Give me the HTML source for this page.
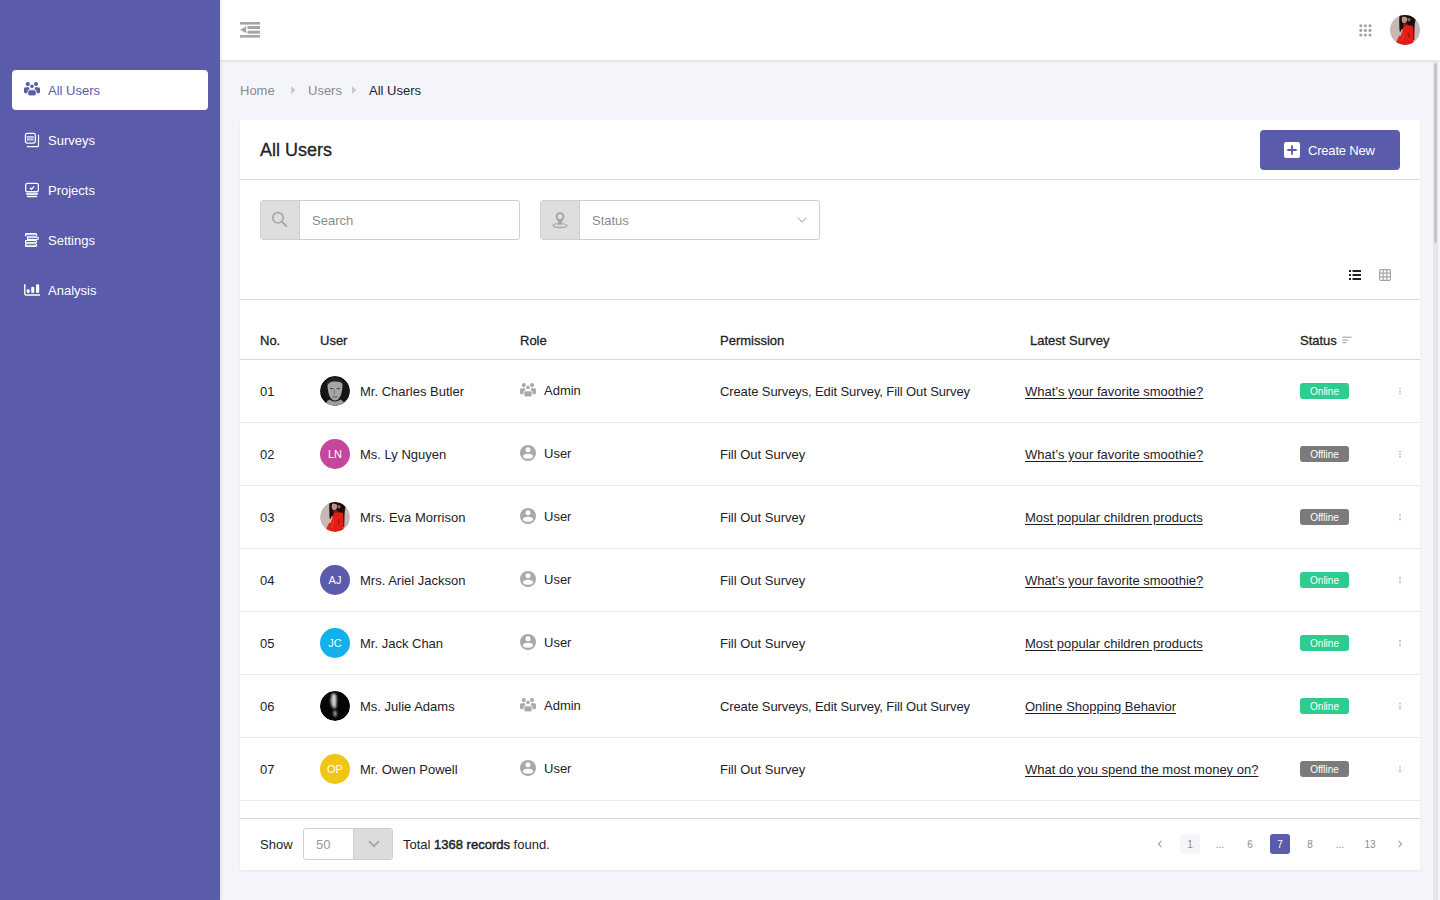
<!DOCTYPE html>
<html><head><meta charset="utf-8"><title>All Users</title>
<style>
*{box-sizing:border-box;margin:0;padding:0}
html,body{width:1440px;height:900px;overflow:hidden}
body{font-family:"Liberation Sans",sans-serif;font-size:13px;color:#1e2228;background:#f4f5fa;position:relative}
.abs{position:absolute}
#side{position:absolute;left:0;top:0;width:220px;height:900px;background:#5a5bab;box-shadow:1px 0 3px rgba(0,0,0,.1);z-index:2}
.mi{position:absolute;left:12px;width:196px;height:40px;border-radius:4px;color:#fff;font-size:13px}
.mi.act{background:#fff;color:#5a5bab}
.mi svg{position:absolute;left:12px;top:12px}
.mi span{position:absolute;left:36px;top:1px;line-height:40px}
#hdr{position:absolute;left:220px;top:0;width:1220px;height:60px;background:#fff;box-shadow:0 1px 3px rgba(0,0,0,.12)}
#sb{position:absolute;left:1434px;top:60px;width:6px;height:840px;background:#f4f5fa}
.crumb{position:absolute;top:83px;line-height:16px;color:#8a8a8a}
#card{position:absolute;left:240px;top:120px;width:1180px;height:750px;background:#fff;box-shadow:0 1px 2px rgba(0,0,0,.06)}
.hline{position:absolute;left:0;width:1180px;height:1px}
.th{position:absolute;top:334px;line-height:14px;font-weight:400;-webkit-text-stroke:.3px #1e2228;color:#1e2228}
.row{position:absolute;left:240px;width:1180px;height:63px;border-bottom:1px solid #eaeaea}
.cell{position:absolute;line-height:16px;top:24px;white-space:nowrap}
.av{position:absolute;left:80px;top:16px;width:30px;height:30px;border-radius:50%;color:#fff;font-size:11px;text-align:center;line-height:30px}
.badge{position:absolute;left:1060px;top:23px;width:49px;height:16px;border-radius:3px;color:#fff;font-size:10px;text-align:center;line-height:17px}
.on{background:#2ecc8e}.off{background:#7b7b7b}
.dots{position:absolute;left:1159px;top:28px;width:2px;height:7px}
.pg{position:absolute;top:834px;width:20px;height:20px;border-radius:3px;text-align:center;line-height:22px;font-size:10px;color:#8c8c8c}
.pg.act{background:#5a5bab;color:#fff}
.ri{position:absolute;left:280px;top:23px}
.lnk{text-decoration:underline;text-underline-offset:2px}
</style></head>
<body>
<svg width="0" height="0" style="position:absolute">
<defs>
<clipPath id="cc"><circle cx="15" cy="15" r="15"/></clipPath>
<filter id="bl" x="-20%" y="-20%" width="140%" height="140%"><feGaussianBlur stdDeviation="0.45"/></filter><filter id="bl2" x="-50%" y="-50%" width="200%" height="200%"><feGaussianBlur stdDeviation="0.8"/></filter>
<symbol id="pEva" viewBox="0 0 30 30"><g clip-path="url(#cc)"><rect width="30" height="30" fill="#c9b6b6"/><g filter="url(#bl)"><path d="M9.5 0H26v3c-.6 2.5-1.2 5-1.4 8.5L24.2 25h-2L21 13l-9 1c-.8 1.2-1.2 2.5-2 3.5L9.5 15C9.3 10 9 5 9.5 0z" fill="#1a1010"/><path d="M12 2c1.6-.6 3.8-.4 4.8.6.9 1.6.5 4-1.2 5.2-1.2.7-2.8.4-3.4-.8C11.6 5.8 11.6 4 12 2z" fill="#c98e88"/><path d="M17.8 3.2c1-.4 2-.2 2.6.5.4 1 0 2.3-.9 2.8-.8.3-1.6 0-1.9-.7-.3-.9-.2-1.9.2-2.6z" fill="#9a5a54"/><path d="M13.2 8.8c1.5-.6 3.5-.6 5 .2l-.8 1.8-3.6.3z" fill="#6a2a24"/><path d="M14 10.8c3-.9 6.5-.9 9 .4.6 5.5.5 12 .4 18.8H8.5c.3-3.5 1.5-7.5 3-11.5.9-2.8 1.5-5.8 2.5-7.7z" fill="#e31c12"/><path d="M5.5 30c.5-3 2-6.5 4-9.5l2.5 1.2C11 24.5 10 27.5 9.5 30z" fill="#e62418"/><path d="M8.8 18.8c.5-1.3 1.3-2 2-1.8l-.5 2.6z" fill="#e0aaa2"/><path d="M18.5 17c1 1.5 1.2 3.5.6 5.5l-1.2-.5z" fill="#a01010"/><path d="M12.5 16c1.5 3 1 7-1 10" fill="none" stroke="#f04a3a" stroke-width=".8"/></g></g></symbol>
<symbol id="pCharles" viewBox="0 0 30 30"><g clip-path="url(#cc)"><rect width="30" height="30" fill="#151515"/><g filter="url(#bl)"><path d="M7.5 9c0-4 3-6.5 7.5-6.5S22.5 5 22.5 9c0 3-.5 7-1.8 10.5-1.3 3-3.5 5-5.7 5s-4.4-2-5.7-5C8 16 7.5 12 7.5 9z" fill="#a3a6a8"/><path d="M7 9.5c0-4.5 3.2-7.5 8-7.5s8.3 2.5 8.5 7c-1.5-2.5-4-3.5-8.5-3.5S9 7 7 9.5z" fill="#232323"/><path d="M10 12.5c1-.8 2.5-.8 3.5 0l-.3.9c-1-.5-2-.5-3 0zM16.5 12.5c1-.8 2.5-.8 3.5 0l-.2.9c-1-.5-2-.5-3 0z" fill="#3c3c3c"/><path d="M14.5 13.5v4.5l-1 .8" fill="none" stroke="#6a6a6a" stroke-width=".8"/><path d="M12.5 20.2c1.5.6 3.5.6 5 0l-.4 1c-1.4.4-2.8.4-4.2 0z" fill="#4a4a4a"/><path d="M5 30c.5-3 2-5.5 4.5-6.5 1.8 1.2 3.5 2 5.5 2s3.7-.8 5.5-2C23 24.5 24.5 27 25 30z" fill="#9a9d9f"/><path d="M3 17c1 3 2.5 5 4 6.5L6 30H0V18z" fill="#0d0d0d"/></g></g></symbol>
<symbol id="pJulie" viewBox="0 0 30 30"><g clip-path="url(#cc)"><rect width="30" height="30" fill="#050505"/><g filter="url(#bl2)"><path d="M11.5 3.5c1.5-1.5 3.8-1.5 4.6.5.6 2.5.6 6.5.2 10.5-.2 1.8-.6 3-1.3 3.2-1.2-.6-2.3-2-3-4-.8-2.5-1-5.5-.5-10.2z" fill="#d4d4d4"/><path d="M10 8c.5 3 1 6 2.5 9" fill="none" stroke="#555" stroke-width="1"/><path d="M13.5 20c1.2-.4 2.5 0 3 1 .4 1.5.2 3.5-.5 4.8-1 .3-1.8-.4-2.2-1.6-.4-1.2-.5-2.8-.3-4.2z" fill="#a8a8a8"/></g></g></symbol>
</defs></svg>
<div id="side">
  <div class="mi act" style="top:70px">
    <svg   width="16" height="14" viewBox="0 0 16 14"><g fill="#5a5bab"><circle cx="3.8" cy="2.1" r="2.1"/><circle cx="12" cy="2.1" r="2.1"/><path d="M0 6.8A1.5 1.5 0 0 1 1.5 5.3H5.2V11.3H1.6A1.6 1.6 0 0 1 0 9.7z"/><path d="M16 6.8A1.5 1.5 0 0 0 14.5 5.3H10.8V11.3H14.4A1.6 1.6 0 0 0 16 9.7z"/><circle cx="8" cy="4.3" r="2.3" stroke="#fff" stroke-width="1"/><rect x="3.8" y="7.8" width="8.4" height="6.1" rx="1.9" stroke="#fff" stroke-width="1"/></g></svg>
    <span>All Users</span>
  </div>
  <div class="mi" style="top:120px">
    <svg width="16" height="16" viewBox="0 0 16 16" style="top:12px"><rect x="1.45" y="1.35" width="9.9" height="9.8" rx="1.8" fill="none" stroke="#fff" stroke-width="1.3"/><path d="M2.8 14.6H13.3a1.2 1.2 0 0 0 1.2-1.2V2.8" fill="none" stroke="#fff" stroke-width="1.2"/><rect x="2.8" y="4.3" width="6.9" height="1" fill="#fff"/><rect x="2.8" y="5.3" width="6.9" height="2.2" fill="#fff" opacity=".5"/><rect x="2.8" y="7.5" width="6.9" height=".9" fill="#fff"/></svg>
    <span>Surveys</span>
  </div>
  <div class="mi" style="top:170px">
    <svg width="16" height="16" viewBox="0 0 16 16"><rect x="1.65" y="1.45" width="12.7" height="8.3" rx="1.5" fill="none" stroke="#fff" stroke-width="1.3"/><path d="M6.1 5.8L7.5 7.2 10.2 4.4" fill="none" stroke="#fff" stroke-width="1.3"/><path d="M1.8 11H14.2L13.5 13H2.5z" fill="#fff" opacity=".85"/><rect x="2.8" y="13.8" width="10.4" height="1.4" rx=".6" fill="#fff"/></svg>
    <span>Projects</span>
  </div>
  <div class="mi" style="top:220px">
    <svg width="16" height="16" viewBox="0 0 16 16"><g fill="#fff"><path d="M1 2.2A1.2 1.2 0 0 1 2.2 1H11.5A1.75 1.75 0 0 1 11.5 4.5H1z"/><path d="M3 4.5H13.2A1.75 1.75 0 0 1 13.2 8H3z"/><path d="M1 8H11.5A1.75 1.75 0 0 1 11.5 11.5H1z"/><path d="M1 11.5H11.5A1.75 1.75 0 0 1 11.5 15H2.2A1.2 1.2 0 0 1 1 13.8z"/></g><g fill="#5a5bab"><rect x="2.3" y="2.7" width="9.5" height="1.1"/><rect x="4.2" y="5.8" width="9.5" height="1.1"/><rect x="2.3" y="9" width="9.5" height="1.1"/><rect x="2.3" y="12.2" width="9.5" height="1.1"/><rect x="1" y="4.5" width="2" height="3.5"/></g></svg>
    <span>Settings</span>
  </div>
  <div class="mi" style="top:270px">
    <svg width="16" height="14" viewBox="0 0 16 14"><path d="M.75 2.3V11.5a1.5 1.5 0 0 0 1.5 1.5H16" fill="none" stroke="#fff" stroke-width="1.4"/><g fill="#fff"><rect x="2.7" y="7.3" width="3" height="3.7" rx="1.2"/><rect x="7.2" y="4.8" width="3.1" height="6.2" rx="1.3"/><rect x="12" y="2.2" width="3.2" height="8.8" rx="1.3"/></g></svg>
    <span>Analysis</span>
  </div>
</div>

<div id="hdr">
  <svg class="abs" style="left:20px;top:22px" width="20" height="16" viewBox="0 0 20 16"><g fill="#a6a6a6"><rect x="0" y="0" width="20" height="2.6"/><rect x="7.5" y="4" width="12.5" height="3"/><rect x="7.5" y="8.7" width="12.5" height="3"/><rect x="0" y="13" width="20" height="2.6"/><path d="M0 7.8L6.2 4.3v7z"/></g></svg>
  <svg class="abs" style="left:1138px;top:24px" width="14" height="14" viewBox="0 0 14 14"><g fill="#a3a3a3"><circle cx="2.8" cy="1.8" r="1.55"/><circle cx="7.4" cy="1.8" r="1.55"/><circle cx="12" cy="1.8" r="1.55"/><circle cx="2.8" cy="6.4" r="1.55"/><circle cx="7.4" cy="6.4" r="1.55"/><circle cx="12" cy="6.4" r="1.55"/><circle cx="2.8" cy="11" r="1.55"/><circle cx="7.4" cy="11" r="1.55"/><circle cx="12" cy="11" r="1.55"/></g></svg>
  <svg class="abs" style="left:1170px;top:15px" width="30" height="30" viewBox="0 0 30 30"><use href="#pEva"/></svg>
</div>

<div class="crumb" style="left:240px">Home</div>
<svg class="abs" style="left:291px;top:86px" width="5" height="8" viewBox="0 0 5 8"><path d="M0 0l4.5 4L0 8z" fill="#c9c9c9"/></svg>
<div class="crumb" style="left:308px">Users</div>
<svg class="abs" style="left:352px;top:86px" width="5" height="8" viewBox="0 0 5 8"><path d="M0 0l4.5 4L0 8z" fill="#c9c9c9"/></svg>
<div class="crumb" style="left:369px;color:#1e2228">All Users</div>

<div id="card">
  <div class="abs" style="left:20px;top:20px;font-size:18px;line-height:20px;-webkit-text-stroke:.3px #1e2228">All Users</div>
  <div class="abs" style="left:1020px;top:10px;width:140px;height:40px;background:#5a5bab;border-radius:4px;color:#fff">
    <svg class="abs" style="left:24px;top:12px" width="16" height="16" viewBox="0 0 16 16"><rect width="16" height="16" rx="2" fill="#fff"/><path d="M8 3.3v9.4M3.3 8h9.4" stroke="#5a5bab" stroke-width="1.8"/></svg>
    <span class="abs" style="left:48px;top:13px;line-height:16px;font-size:13px;letter-spacing:-.2px">Create New</span>
  </div>
  <div class="hline" style="top:59px;background:#dcdcdc"></div>
  <div class="hline" style="top:179px;background:#dcdcdc"></div>
  <div class="hline" style="top:239px;background:#d6d6d6"></div>
  <div class="hline" style="top:698px;background:#d6d6d6"></div>
</div>

<div class="th" style="left:260px">No.</div>
<div class="th" style="left:320px">User</div>
<div class="th" style="left:520px">Role</div>
<div class="th" style="left:720px">Permission</div>
<div class="th" style="left:1030px">Latest Survey</div>
<div class="th" style="left:1300px">Status</div>

<div class="row" style="top:360px">
  <div class="cell" style="left:20px">01</div>
  <svg class="av" width="30" height="30" viewBox="0 0 30 30"><use href="#pCharles"/></svg>
  <div class="cell" style="left:120px">Mr. Charles Butler</div>
  <svg class="ri" style="top:23px" width="16" height="14" viewBox="0 0 16 14"><g fill="#a9a9a9"><circle cx="3.8" cy="2.1" r="2.1"/><circle cx="12" cy="2.1" r="2.1"/><path d="M0 6.8A1.5 1.5 0 0 1 1.5 5.3H5.2V11.3H1.6A1.6 1.6 0 0 1 0 9.7z"/><path d="M16 6.8A1.5 1.5 0 0 0 14.5 5.3H10.8V11.3H14.4A1.6 1.6 0 0 0 16 9.7z"/><circle cx="8" cy="4.3" r="2.3" stroke="#fff" stroke-width="1"/><rect x="3.8" y="7.8" width="8.4" height="6.1" rx="1.9" stroke="#fff" stroke-width="1"/></g></svg>
  <div class="cell" style="left:304px;top:23px">Admin</div>
  <div class="cell" style="left:480px;letter-spacing:-.11px">Create Surveys, Edit Survey, Fill Out Survey</div>
  <div class="cell lnk" style="left:785px">What’s your favorite smoothie?</div>
  <div class="badge on">Online</div>
  <svg class="dots" width="2" height="7" viewBox="0 0 2 7"><g fill="#bdbdbd"><rect y="0" width="2" height="1.2"/><rect y="2.6" width="2" height="1.6" fill="#d2d2d2"/><rect y="5" width="2" height="1.2"/></g></svg>
</div>
<div class="row" style="top:423px">
  <div class="cell" style="left:20px">02</div>
  <div class="av" style="background:#c4479b">LN</div>
  <div class="cell" style="left:120px">Ms. Ly Nguyen</div>
  <svg class="ri" style="top:22px" width="16" height="16" viewBox="0 0 16 16"><circle cx="8" cy="8" r="8" fill="#a9a9a9"/><circle cx="8" cy="4.7" r="2.5" fill="#fff"/><ellipse cx="8" cy="11.2" rx="5" ry="2.5" fill="#fff"/></svg>
  <div class="cell" style="left:304px;top:23px">User</div>
  <div class="cell" style="left:480px">Fill Out Survey</div>
  <div class="cell lnk" style="left:785px">What’s your favorite smoothie?</div>
  <div class="badge off">Offline</div>
  <svg class="dots" width="2" height="7" viewBox="0 0 2 7"><g fill="#bdbdbd"><rect y="0" width="2" height="1.2"/><rect y="2.6" width="2" height="1.6" fill="#d2d2d2"/><rect y="5" width="2" height="1.2"/></g></svg>
</div>
<div class="row" style="top:486px">
  <div class="cell" style="left:20px">03</div>
  <svg class="av" width="30" height="30" viewBox="0 0 30 30"><use href="#pEva"/></svg>
  <div class="cell" style="left:120px">Mrs. Eva Morrison</div>
  <svg class="ri" style="top:22px" width="16" height="16" viewBox="0 0 16 16"><circle cx="8" cy="8" r="8" fill="#a9a9a9"/><circle cx="8" cy="4.7" r="2.5" fill="#fff"/><ellipse cx="8" cy="11.2" rx="5" ry="2.5" fill="#fff"/></svg>
  <div class="cell" style="left:304px;top:23px">User</div>
  <div class="cell" style="left:480px">Fill Out Survey</div>
  <div class="cell lnk" style="left:785px">Most popular children products</div>
  <div class="badge off">Offline</div>
  <svg class="dots" width="2" height="7" viewBox="0 0 2 7"><g fill="#bdbdbd"><rect y="0" width="2" height="1.2"/><rect y="2.6" width="2" height="1.6" fill="#d2d2d2"/><rect y="5" width="2" height="1.2"/></g></svg>
</div>
<div class="row" style="top:549px">
  <div class="cell" style="left:20px">04</div>
  <div class="av" style="background:#5a5bab">AJ</div>
  <div class="cell" style="left:120px">Mrs. Ariel Jackson</div>
  <svg class="ri" style="top:22px" width="16" height="16" viewBox="0 0 16 16"><circle cx="8" cy="8" r="8" fill="#a9a9a9"/><circle cx="8" cy="4.7" r="2.5" fill="#fff"/><ellipse cx="8" cy="11.2" rx="5" ry="2.5" fill="#fff"/></svg>
  <div class="cell" style="left:304px;top:23px">User</div>
  <div class="cell" style="left:480px">Fill Out Survey</div>
  <div class="cell lnk" style="left:785px">What’s your favorite smoothie?</div>
  <div class="badge on">Online</div>
  <svg class="dots" width="2" height="7" viewBox="0 0 2 7"><g fill="#bdbdbd"><rect y="0" width="2" height="1.2"/><rect y="2.6" width="2" height="1.6" fill="#d2d2d2"/><rect y="5" width="2" height="1.2"/></g></svg>
</div>
<div class="row" style="top:612px">
  <div class="cell" style="left:20px">05</div>
  <div class="av" style="background:#12b1eb">JC</div>
  <div class="cell" style="left:120px">Mr. Jack Chan</div>
  <svg class="ri" style="top:22px" width="16" height="16" viewBox="0 0 16 16"><circle cx="8" cy="8" r="8" fill="#a9a9a9"/><circle cx="8" cy="4.7" r="2.5" fill="#fff"/><ellipse cx="8" cy="11.2" rx="5" ry="2.5" fill="#fff"/></svg>
  <div class="cell" style="left:304px;top:23px">User</div>
  <div class="cell" style="left:480px">Fill Out Survey</div>
  <div class="cell lnk" style="left:785px">Most popular children products</div>
  <div class="badge on">Online</div>
  <svg class="dots" width="2" height="7" viewBox="0 0 2 7"><g fill="#bdbdbd"><rect y="0" width="2" height="1.2"/><rect y="2.6" width="2" height="1.6" fill="#d2d2d2"/><rect y="5" width="2" height="1.2"/></g></svg>
</div>
<div class="row" style="top:675px">
  <div class="cell" style="left:20px">06</div>
  <svg class="av" width="30" height="30" viewBox="0 0 30 30"><use href="#pJulie"/></svg>
  <div class="cell" style="left:120px">Ms. Julie Adams</div>
  <svg class="ri" style="top:23px" width="16" height="14" viewBox="0 0 16 14"><g fill="#a9a9a9"><circle cx="3.8" cy="2.1" r="2.1"/><circle cx="12" cy="2.1" r="2.1"/><path d="M0 6.8A1.5 1.5 0 0 1 1.5 5.3H5.2V11.3H1.6A1.6 1.6 0 0 1 0 9.7z"/><path d="M16 6.8A1.5 1.5 0 0 0 14.5 5.3H10.8V11.3H14.4A1.6 1.6 0 0 0 16 9.7z"/><circle cx="8" cy="4.3" r="2.3" stroke="#fff" stroke-width="1"/><rect x="3.8" y="7.8" width="8.4" height="6.1" rx="1.9" stroke="#fff" stroke-width="1"/></g></svg>
  <div class="cell" style="left:304px;top:23px">Admin</div>
  <div class="cell" style="left:480px;letter-spacing:-.11px">Create Surveys, Edit Survey, Fill Out Survey</div>
  <div class="cell lnk" style="left:785px">Online Shopping Behavior</div>
  <div class="badge on">Online</div>
  <svg class="dots" width="2" height="7" viewBox="0 0 2 7"><g fill="#bdbdbd"><rect y="0" width="2" height="1.2"/><rect y="2.6" width="2" height="1.6" fill="#d2d2d2"/><rect y="5" width="2" height="1.2"/></g></svg>
</div>
<div class="row" style="top:738px">
  <div class="cell" style="left:20px">07</div>
  <div class="av" style="background:#f1c514">OP</div>
  <div class="cell" style="left:120px">Mr. Owen Powell</div>
  <svg class="ri" style="top:22px" width="16" height="16" viewBox="0 0 16 16"><circle cx="8" cy="8" r="8" fill="#a9a9a9"/><circle cx="8" cy="4.7" r="2.5" fill="#fff"/><ellipse cx="8" cy="11.2" rx="5" ry="2.5" fill="#fff"/></svg>
  <div class="cell" style="left:304px;top:23px">User</div>
  <div class="cell" style="left:480px">Fill Out Survey</div>
  <div class="cell lnk" style="left:785px">What do you spend the most money on?</div>
  <div class="badge off">Offline</div>
  <svg class="dots" width="2" height="7" viewBox="0 0 2 7"><g fill="#bdbdbd"><rect y="0" width="2" height="1.2"/><rect y="2.6" width="2" height="1.6" fill="#d2d2d2"/><rect y="5" width="2" height="1.2"/></g></svg>
</div>
<!-- filters -->
<div class="abs" style="left:260px;top:200px;width:260px;height:40px;border:1px solid #cfcfcf;border-radius:3px;background:#fff;overflow:hidden">
  <div class="abs" style="left:0;top:0;width:39px;height:38px;background:#dedede;border-right:1px solid #cfcfcf"></div>
  <svg class="abs" style="left:0;top:0" width="39" height="38" viewBox="0 0 39 38"><circle cx="17" cy="16.8" r="5.2" fill="none" stroke="#a6a6a6" stroke-width="1.6"/><path d="M20.8 20.6l5 5" stroke="#a6a6a6" stroke-width="1.8"/></svg>
  <div class="abs" style="left:51px;top:12px;line-height:16px;color:#8c8c8c">Search</div>
</div>
<div class="abs" style="left:540px;top:200px;width:280px;height:40px;border:1px solid #cfcfcf;border-radius:3px;background:#fff;overflow:hidden">
  <div class="abs" style="left:0;top:0;width:39px;height:38px;background:#dedede;border-right:1px solid #cfcfcf"></div>
  <svg class="abs" style="left:0;top:0" width="39" height="38" viewBox="0 0 39 38"><path fill="#a6a6a6" fill-rule="evenodd" d="M19 24.8L15.12 17.58A4.4 4.4 0 1 1 22.88 17.58Z M21.5 15.5A2.5 2.5 0 1 0 16.5 15.5A2.5 2.5 0 1 0 21.5 15.5Z"/><ellipse cx="19" cy="24.6" rx="6.9" ry="1.9" fill="none" stroke="#a6a6a6" stroke-width="1.3"/></svg>
  <div class="abs" style="left:51px;top:12px;line-height:16px;color:#8c8c8c">Status</div>
  <svg class="abs" style="left:256px;top:16px" width="10" height="6" viewBox="0 0 10 6"><path d="M.7.7L5 5 9.3.7" fill="none" stroke="#bdbdbd" stroke-width="1.2"/></svg>
</div>
<!-- view icons -->
<svg class="abs" style="left:1349px;top:270px" width="12" height="10" viewBox="0 0 12 10"><g fill="#1e2228"><rect x="0" y="0" width="2" height="2"/><rect x="0" y="4" width="2" height="2"/><rect x="0" y="8" width="2" height="2"/><rect x="3.5" y="0" width="8.5" height="2"/><rect x="3.5" y="4" width="8.5" height="2"/><rect x="3.5" y="8" width="8.5" height="2"/></g></svg>
<svg class="abs" style="left:1379px;top:269px" width="12" height="12" viewBox="0 0 12 12"><g fill="none" stroke="#a6a6a6" stroke-width="1.2"><rect x=".6" y=".6" width="10.8" height="10.8" rx="1.2"/><path d="M4.2 .5v11M7.8 .5v11M.5 4.2h11M.5 7.8h11"/></g></svg>
<!-- sort icon -->
<svg class="abs" style="left:1342px;top:336px" width="10" height="8" viewBox="0 0 10 8"><g fill="#ababab"><rect x=".5" y=".6" width="9" height="1.2"/><rect x=".5" y="3.5" width="5.8" height="1.2"/><rect x=".5" y="6" width="3.9" height="1.2"/></g></svg>
<!-- footer -->
<div class="abs" style="left:260px;top:837px;line-height:16px">Show</div>
<div class="abs" style="left:303px;top:828px;width:90px;height:32px;border:1px solid #cfcfcf;border-radius:3px;background:#fff;overflow:hidden">
  <div class="abs" style="left:12px;top:8px;line-height:16px;color:#9a9a9a">50</div>
  <div class="abs" style="left:49px;top:0;width:40px;height:30px;background:#dcdcdc;border-left:1px solid #cfcfcf"></div>
  <svg class="abs" style="left:64px;top:11px" width="12" height="8" viewBox="0 0 12 8"><path d="M1 1.2L6 6.2 11 1.2" fill="none" stroke="#a3a3a3" stroke-width="1.8"/></svg>
</div>
<div class="abs" style="left:403px;top:837px;line-height:16px">Total <span style="-webkit-text-stroke:.45px #1e2228">1368 records</span> found.</div>
<div class="abs" style="left:1157px;top:840px;line-height:0"><svg width="6" height="8" viewBox="0 0 6 8"><path d="M4.5.8L1.3 4l3.2 3.2" fill="none" stroke="#a0a0a0" stroke-width="1.1"/></svg></div>
<div class="pg" style="left:1180px;background:#f4f5f5">1</div>
<div class="pg" style="left:1210px">...</div>
<div class="pg" style="left:1240px">6</div>
<div class="pg act" style="left:1270px">7</div>
<div class="pg" style="left:1300px">8</div>
<div class="pg" style="left:1330px">...</div>
<div class="pg" style="left:1355px;width:30px">13</div>
<div class="abs" style="left:1397px;top:840px;line-height:0"><svg width="6" height="8" viewBox="0 0 6 8"><path d="M1.5.8L4.7 4 1.5 7.2" fill="none" stroke="#a0a0a0" stroke-width="1.1"/></svg></div>

<div class="abs" style="left:1433px;top:60px;width:5px;height:840px;background:#e7e7e9"></div>
<div class="abs" style="left:1434px;top:63px;width:3px;height:180px;border-radius:1.5px;background:#c6c6c6"></div>
</body></html>
